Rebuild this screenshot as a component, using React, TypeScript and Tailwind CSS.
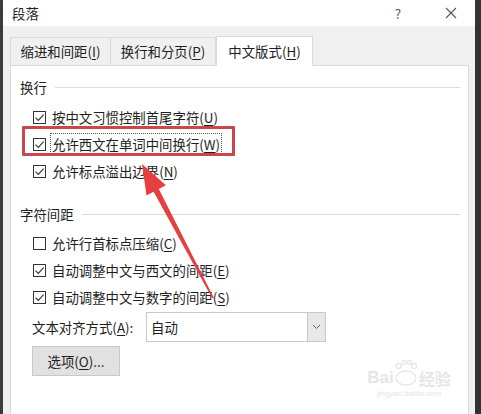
import React from 'react'

const font = { fontFamily: '"Noto Sans CJK SC", "Noto Sans", sans-serif' }

function Key({ k }: { k: string }) {
  return (
    <>
      (<span className="underline underline-offset-2">{k}</span>)
    </>
  )
}

function CheckBox({ checked }: { checked: boolean }) {
  return (
    <span className="w-[13px] h-[13px] border border-[#333] bg-white flex items-center justify-center shrink-0">
      {checked && (
        <svg width="11" height="11" viewBox="0 0 11 11">
          <path d="M1.5 5.6 L4.3 8.4 L9.6 2.6" fill="none" stroke="#333" strokeWidth="1.1" />
        </svg>
      )}
    </span>
  )
}

function Row({ checked, label, k, boxed }: { checked: boolean; label: string; k: string; boxed?: boolean }) {
  return (
    <div className="h-[27px] flex items-center pl-[13px]">
      <CheckBox checked={checked} />
      <span className={'ml-[5px] px-[1px] ' + (boxed ? 'outline outline-1 outline-dotted outline-[#555]' : '')}>
        {label}
        <Key k={k} />
      </span>
    </div>
  )
}

function Heading({ text }: { text: string }) {
  return (
    <div className="h-[20px] flex items-center gap-[8px]">
      <span>{text}</span>
      <div className="flex-1 h-px bg-[#dcdcdc] mr-[-2px]" />
    </div>
  )
}

export default function App() {
  return (
    <div className="w-[481px] h-[414px] flex overflow-hidden text-[13.4px] text-[#1e1e1e] relative" style={font}>
      <div className="w-[3px] bg-[#3c3c3c]" />
      <div className="flex-1 flex flex-col bg-[#f0f0f0]">
        <div className="h-[26px] bg-white flex items-center pl-[9px] pr-[18px]">
          <span className="flex-1">段落</span>
          <span className="text-[#555] mr-[44px]">?</span>
          <svg width="12" height="12" viewBox="0 0 12 12">
            <path d="M1 1 L11 11 M11 1 L1 11" stroke="#555" strokeWidth="1.1" />
          </svg>
        </div>
        <div className="h-[9px]" />
        <div className="flex pl-[7px] h-[30px] items-end">
          <div className="w-[101px] h-[28px] border border-b-0 border-[#dadada] bg-[#f0f0f0] flex items-center justify-center">
            缩进和间距<Key k="I" />
          </div>
          <div className="w-[105px] h-[28px] border border-l-0 border-b-0 border-[#dadada] bg-[#f0f0f0] flex items-center justify-center">
            换行和分页<Key k="P" />
          </div>
          <div className="w-[97px] h-[30px] border border-b-0 border-[#dadada] bg-white flex items-center justify-center mb-[-1px] relative z-10">
            中文版式<Key k="H" />
          </div>
        </div>
        <div className="ml-[7px] mr-[6px] flex-1 bg-white border border-[#dadada] border-b-0 pl-[9px] pr-[10px] pt-[11px]">
          <Heading text="换行" />
          <div className="mt-[7px]">
            <Row checked label="按中文习惯控制首尾字符" k="U" />
            <Row checked label="允许西文在单词中间换行" k="W" boxed />
            <Row checked label="允许标点溢出边界" k="N" />
          </div>
          <div className="mt-[19px]">
            <Heading text="字符间距" />
          </div>
          <div className="mt-[6px]">
            <Row checked={false} label="允许行首标点压缩" k="C" />
            <Row checked label="自动调整中文与西文的间距" k="E" />
            <Row checked label="自动调整中文与数字的间距" k="S" />
          </div>
          <div className="mt-[1px] h-[30px] flex items-center pl-[12px]">
            <span className="w-[114px]">
              文本对齐方式<Key k="A" />:
            </span>
            <div className="w-[180px] h-[30px] border border-[#c9c9c9] flex items-stretch">
              <span className="flex-1 flex items-center pl-[4px]">自动</span>
              <div className="w-[18px] bg-[#e8e8e8] border-l border-[#c9c9c9] flex items-center justify-center">
                <svg width="9" height="6" viewBox="0 0 9 6">
                  <path d="M1 1 L4.5 4.5 L8 1" fill="none" stroke="#666" strokeWidth="1" />
                </svg>
              </div>
            </div>
          </div>
          <div className="mt-[4px] ml-[12px] w-[88px] h-[30px] bg-[#e1e1e1] border border-[#c8c8c8] flex items-center justify-center">
            选项<Key k="O" />...
          </div>
        </div>
      </div>
      <div className="w-[6px] bg-[#333]" />

      {/* red annotation box */}
      <div className="absolute left-[22px] top-[126px] w-[213px] h-[30px] border-[3px] border-[#c9474b] rounded-[1px]" />

      {/* red annotation arrow */}
      <svg className="absolute left-0 top-0" width="481" height="414" viewBox="0 0 481 414">
        <polygon
          points="142,164 165.9,185.2 158.8,189 213.7,297.6 212.3,298.4 153.6,191.8 146.5,195.6"
          fill="#e5403f"
        />
      </svg>

      {/* baidu watermark */}
      <div className="absolute left-[364px] top-[360px] w-[90px] flex flex-col items-center text-[#e6e6e6] leading-none" style={{ fontFamily: '"Liberation Sans", sans-serif' }}>
        <div className="flex items-end h-[26px]">
          <span className="text-[17px] font-bold leading-none">Bai</span>
          <svg width="24" height="26" viewBox="0 0 24 26">
            <circle cx="4.5" cy="6" r="2.5" fill="none" stroke="#e6e6e6" strokeWidth="1.3" />
            <circle cx="10" cy="2.5" r="2" fill="none" stroke="#e6e6e6" strokeWidth="1.3" />
            <circle cx="15.5" cy="2.5" r="2" fill="none" stroke="#e6e6e6" strokeWidth="1.3" />
            <circle cx="20" cy="6" r="2.5" fill="none" stroke="#e6e6e6" strokeWidth="1.3" />
            <ellipse cx="12" cy="18" rx="10" ry="7" fill="none" stroke="#e6e6e6" strokeWidth="1.3" />
          </svg>
          <span className="text-[16px] font-bold ml-[1px] leading-none" style={font}>经验</span>
        </div>
        <span className="text-[8px] mt-[4px]">jingyan.baidu.com</span>
      </div>
    </div>
  )
}
